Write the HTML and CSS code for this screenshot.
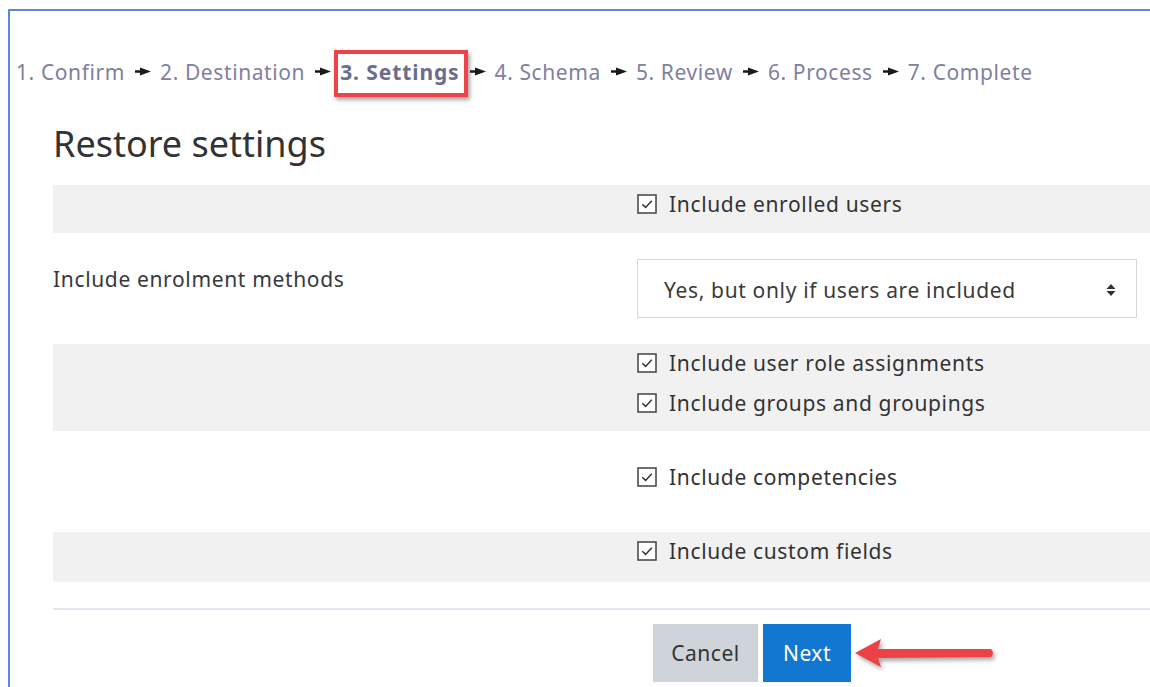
FILE: index.html
```html
<!DOCTYPE html>
<html lang="en">
<head>
<meta charset="utf-8">
<title>Restore settings</title>
<link rel="stylesheet" href="styles.css">
</head>
<body>
<div class="frame">
  <nav class="steps">
    <span class="step">1. Confirm</span><svg class="sep" viewBox="0 0 16 9"><path d="M0 3.3 H5 V0.5 L16 4.5 L5 8.5 V5.7 H0 Z" fill="#1a1a1a"/></svg><span class="step">2. Destination</span><svg class="sep" viewBox="0 0 16 9"><path d="M0 3.3 H5 V0.5 L16 4.5 L5 8.5 V5.7 H0 Z" fill="#1a1a1a"/></svg><span class="step current">3. Settings</span><svg class="sep" viewBox="0 0 16 9"><path d="M0 3.3 H5 V0.5 L16 4.5 L5 8.5 V5.7 H0 Z" fill="#1a1a1a"/></svg><span class="step">4. Schema</span><svg class="sep" viewBox="0 0 16 9"><path d="M0 3.3 H5 V0.5 L16 4.5 L5 8.5 V5.7 H0 Z" fill="#1a1a1a"/></svg><span class="step">5. Review</span><svg class="sep" viewBox="0 0 16 9"><path d="M0 3.3 H5 V0.5 L16 4.5 L5 8.5 V5.7 H0 Z" fill="#1a1a1a"/></svg><span class="step">6. Process</span><svg class="sep" viewBox="0 0 16 9"><path d="M0 3.3 H5 V0.5 L16 4.5 L5 8.5 V5.7 H0 Z" fill="#1a1a1a"/></svg><span class="step">7. Complete</span>
  </nav>

  <section class="restore">
    <h2 class="title">Restore settings</h2>

    <form class="settings">
      <div class="row shaded r1">
        <div class="label"></div>
        <div class="field">
          <label class="check"><svg class="box" viewBox="0 0 20 20"><rect x="1" y="1" width="18" height="18" fill="#fff" stroke="#4d4d4d" stroke-width="1.6"/><path d="M5.3 10.3 L8.6 13.4 L14.8 6.8" fill="none" stroke="#333" stroke-width="1.5"/></svg>Include enrolled users</label>
        </div>
      </div>

      <div class="row r2">
        <div class="label">Include enrolment methods</div>
        <div class="field">
          <div class="select">
            <span>Yes, but only if users are included</span>
            <svg class="updown" viewBox="0 0 10 14"><path d="M5 1 L9.5 6 H0.5 Z M5 13 L9.5 8 H0.5 Z" fill="#333"/></svg>
          </div>
        </div>
      </div>

      <div class="row shaded r3">
        <div class="label"></div>
        <div class="field stack">
          <label class="check"><svg class="box" viewBox="0 0 20 20"><rect x="1" y="1" width="18" height="18" fill="#fff" stroke="#4d4d4d" stroke-width="1.6"/><path d="M5.3 10.3 L8.6 13.4 L14.8 6.8" fill="none" stroke="#333" stroke-width="1.5"/></svg>Include user role assignments</label>
          <label class="check"><svg class="box" viewBox="0 0 20 20"><rect x="1" y="1" width="18" height="18" fill="#fff" stroke="#4d4d4d" stroke-width="1.6"/><path d="M5.3 10.3 L8.6 13.4 L14.8 6.8" fill="none" stroke="#333" stroke-width="1.5"/></svg>Include groups and groupings</label>
        </div>
      </div>

      <div class="row r4">
        <div class="label"></div>
        <div class="field">
          <label class="check"><svg class="box" viewBox="0 0 20 20"><rect x="1" y="1" width="18" height="18" fill="#fff" stroke="#4d4d4d" stroke-width="1.6"/><path d="M5.3 10.3 L8.6 13.4 L14.8 6.8" fill="none" stroke="#333" stroke-width="1.5"/></svg>Include competencies</label>
        </div>
      </div>

      <div class="row shaded r5">
        <div class="label"></div>
        <div class="field">
          <label class="check"><svg class="box" viewBox="0 0 20 20"><rect x="1" y="1" width="18" height="18" fill="#fff" stroke="#4d4d4d" stroke-width="1.6"/><path d="M5.3 10.3 L8.6 13.4 L14.8 6.8" fill="none" stroke="#333" stroke-width="1.5"/></svg>Include custom fields</label>
        </div>
      </div>

      <hr class="divider">

      <div class="actions">
        <div class="label"></div>
        <div class="buttons">
          <button type="button" class="btn btn-secondary">Cancel</button>
          <button type="button" class="btn btn-primary">Next</button>
          <svg class="pointer" viewBox="0 0 160 40"><path d="M4 20 L30 6 L27 16 L140 16 Q144 20 140 24 L27 25 L30 34 Z" fill="#ee4047"/></svg>
        </div>
      </div>
    </form>
  </section>
</div>
</body>
</html>
```

FILE: styles.css
```css
html, body {
  margin: 0;
  padding: 0;
  background: #fff;
  overflow: hidden;
}

body {
  font-family: "Noto Sans", "Open Sans", sans-serif;
  color: #373a3c;
}

.frame {
  margin: 9px 0 0 8px;
  border-top: 2px solid #5b88db;
  border-left: 2px solid #5b88db;
  height: 700px;
}

/* step trail */
.steps {
  padding: 47px 0 0 6px;
  font-size: 21px;
  letter-spacing: 0.6px;
  line-height: 28px;
  color: #8080a0;
  white-space: nowrap;
}

.sep {
  width: 16px;
  height: 9px;
  margin: 0 9px 0 10px;
  vertical-align: 4px;
}

.current {
  position: relative;
  font-weight: 700;
  color: #6c6c8c;
  letter-spacing: 0.9px;
}

.current::after {
  content: "";
  position: absolute;
  left: -6px;
  right: -8px;
  top: -8px;
  bottom: -11px;
  border: 4px solid #ef434a;
  box-shadow: 2px 3px 4px rgba(0, 0, 0, 0.35);
}

/* form area */
.restore {
  padding-left: 43px;
}

.title {
  margin: 36px 0 19px;
  font-size: 36px;
  line-height: 44px;
  font-weight: 400;
  color: #333;
}

.settings {
  margin: 0;
}

.row,
.actions {
  display: grid;
  grid-template-columns: 584px 1fr;
}

.shaded {
  background: #f1f1f1;
}

.label {
  font-size: 21px;
  letter-spacing: 0.65px;
  line-height: 30px;
}

.check {
  display: flex;
  align-items: center;
  gap: 12px;
  font-size: 21px;
  letter-spacing: 0.65px;
  line-height: 30px;
  color: #333;
}

.box {
  width: 20px;
  height: 20px;
  flex: none;
}

.stack {
  display: flex;
  flex-direction: column;
  gap: 10px;
}

.r1 { padding: 4px 0 14px; }
.r2 { padding: 26px 0; }
.r2 .label { padding-top: 5px; }
.r3 { padding: 4px 0 13px; }
.r4 { padding: 31px 0 40px; }
.r5 { padding: 4px 0 16px; }

.select {
  box-sizing: border-box;
  width: 500px;
  height: 59px;
  border: 1px solid #d4d8dd;
  background: #fff;
  display: flex;
  align-items: center;
  justify-content: space-between;
  padding: 2px 20px 0 26px;
  font-size: 21px;
  letter-spacing: 0.65px;
  color: #3a3a3a;
}

.updown {
  width: 10px;
  height: 14px;
}

.divider {
  margin: 26px 0 0;
  border: 0;
  border-top: 2px solid #e1e6ee;
}

.actions {
  padding-top: 14px;
}

.buttons {
  position: relative;
  display: flex;
  gap: 5px;
  padding-left: 16px;
}

.btn {
  height: 58px;
  border: 0;
  font-family: inherit;
  font-size: 21px;
  letter-spacing: 0.5px;
  padding: 0;
}

.btn-secondary {
  background: #ced4da;
  color: #333;
  width: 105px;
}

.btn-primary {
  background: #1177d1;
  color: #fff;
  width: 88px;
}

.pointer {
  position: absolute;
  left: 214px;
  top: 9px;
  width: 160px;
  height: 40px;
  filter: drop-shadow(2px 3px 2px rgba(0, 0, 0, 0.35));
}
```
